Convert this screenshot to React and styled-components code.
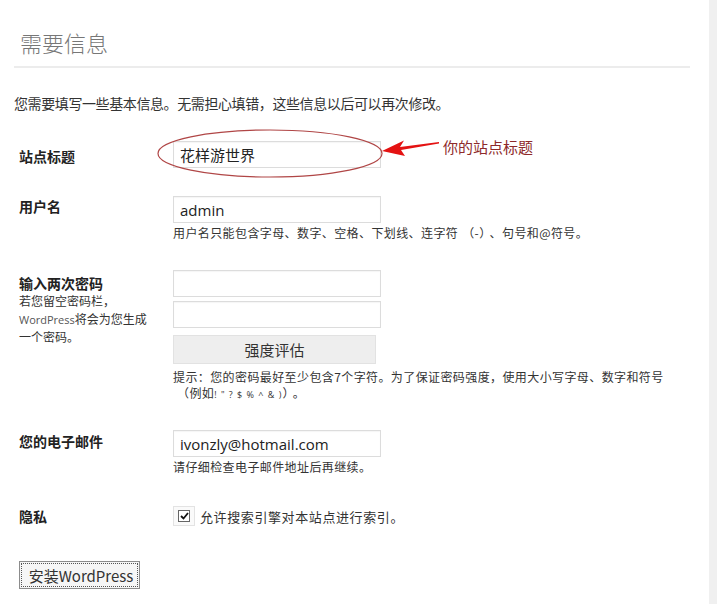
import styled, { createGlobalStyle } from 'styled-components';

const GlobalStyle = createGlobalStyle`
  html, body {
    margin: 0;
    padding: 0;
    background: #fff;
  }
  body {
    font-family: 'Open Sans', 'Noto Sans CJK SC', sans-serif;
    color: #333;
  }
  * { box-sizing: border-box; }
`;

const Page = styled.div`
  position: relative;
  display: flex;
  width: 717px;
  height: 604px;
  overflow: hidden;
`;

const Main = styled.div`
  flex: 1;
  padding: 0 19px 0 14px;
`;

const ScrollStrip = styled.div`
  width: 8px;
  background: #f0f0f0;
`;

const Heading = styled.h1`
  margin: 27px 0 0;
  padding-left: 6px;
  font-size: 22px;
  line-height: 30px;
  font-weight: 300;
  color: #777;
  font-family: 'Noto Sans CJK SC', sans-serif;
`;

const Divider = styled.div`
  margin-top: 9px;
  height: 2px;
  background: #ececec;
`;

const Intro = styled.p`
  margin: 25px 0 0;
  font-size: 14px;
  line-height: 20px;
  letter-spacing: -0.4px;
  font-family: 'Noto Sans CJK SC', sans-serif;
  color: #333;
`;

const Row = styled.div`
  display: flex;
  padding-left: 5px;
  margin-top: ${p => p.$top}px;
`;

const Label = styled.div`
  width: 154px;
  flex-shrink: 0;
  padding-top: ${p => p.$pad || 0}px;
`;

const LabelTitle = styled.div`
  font-size: 14px;
  line-height: 20px;
  font-weight: 700;
  color: #222;
  font-family: 'Noto Sans CJK SC', sans-serif;
`;

const LabelNote = styled.div`
  margin-top: -1px;
  font-size: 12px;
  line-height: 17.5px;
  color: #333;
  font-family: 'Noto Sans CJK SC', sans-serif;
`;

const Small = styled.span`
  font-family: 'Open Sans', sans-serif;
  font-size: 11px;
  color: #555;
`;

const Field = styled.div`
  display: flex;
  flex-direction: column;
  align-items: flex-start;
`;

const Input = styled.input`
  width: 208px;
  height: 27px;
  margin-top: ${p => p.$top || 0}px;
  padding: 0 6px;
  border: 1px solid #dcdcdc;
  box-shadow: inset 0 1px 1px rgba(0, 0, 0, 0.04);
  font-size: 15px;
  font-family: 'Open Sans', 'Noto Sans CJK SC', sans-serif;
  color: #222;
  outline: none;
  background: #fff;
`;

const Hint = styled.div`
  margin-top: ${p => p.$top || 2}px;
  font-size: 12px;
  line-height: 16px;
  letter-spacing: 0.4px;
  color: #333;
  font-family: 'Noto Sans CJK SC', sans-serif;
  white-space: nowrap;
`;

// full-width brackets: keep the empty half of the em box
const Paren = styled.span`
  padding: ${p => (p.$left ? '0 0 0 4px' : '0 4px 0 0')};
`;

const TinyLatin = styled.span`
  font-family: 'Open Sans', sans-serif;
  font-size: 9px;
  letter-spacing: 1px;
`;

const StrengthBox = styled.div`
  margin-top: 7px;
  width: 203px;
  height: 29px;
  display: flex;
  align-items: center;
  justify-content: center;
  background: #eeeeee;
  border: 1px solid #e2e2e2;
  font-size: 15px;
  color: #333;
  font-family: 'Noto Sans CJK SC', sans-serif;
`;

const CheckRow = styled.label`
  display: flex;
  align-items: center;
  gap: 5px;
  font-size: 13px;
  letter-spacing: 0.6px;
  color: #333;
  font-family: 'Noto Sans CJK SC', sans-serif;
`;

const CheckFrame = styled.span`
  width: 22px;
  height: 20px;
  display: flex;
  align-items: center;
  justify-content: center;
  border: 1px solid #e3e3e3;
  background: #fafafa;
`;

const CheckBox = styled.span`
  width: 12px;
  height: 12px;
  display: flex;
  align-items: center;
  justify-content: center;
  border: 1px solid #666;
  background: #fff;
`;

const InstallButton = styled.button`
  margin: 35px 0 0 5px;
  width: 121px;
  height: 28px;
  padding: 0 0 0 3px;
  border: 1px solid #8c8c8c;
  background: #f6f6f6;
  font-size: 15px;
  color: #333;
  font-family: 'Noto Sans CJK SC', sans-serif;
  outline: 1px dotted #555;
  outline-offset: -3px;
`;

const Overlay = styled.svg`
  position: absolute;
  left: 0;
  top: 0;
  pointer-events: none;
`;

const Callout = styled.span`
  position: absolute;
  left: 443px;
  top: 136px;
  font-size: 15px;
  line-height: 22px;
  color: #8e2a2a;
  font-family: 'Noto Sans CJK SC', sans-serif;
`;

export default function App() {
  return (
    <Page>
      <GlobalStyle />
      <Main>
        <Heading>需要信息</Heading>
        <Divider />
        <Intro>您需要填写一些基本信息。无需担心填错，这些信息以后可以再次修改。</Intro>

        <Row $top={28}>
          <Label $pad={5}><LabelTitle>站点标题</LabelTitle></Label>
          <Field>
            <Input defaultValue="花样游世界" />
          </Field>
        </Row>

        <Row $top={28}>
          <Label $pad={0}><LabelTitle>用户名</LabelTitle></Label>
          <Field>
            <Input defaultValue="admin" />
            <Hint>
              用户名只能包含字母、数字、空格、下划线、连字符<Paren $left>（</Paren>-<Paren>）</Paren>、句号和@符号。
            </Hint>
          </Field>
        </Row>

        <Row $top={29}>
          <Label $pad={3}>
            <LabelTitle>输入两次密码</LabelTitle>
            <LabelNote>
              若您留空密码栏，<br />
              <Small>WordPress</Small>将会为您生成<br />
              一个密码。
            </LabelNote>
          </Label>
          <Field>
            <Input type="password" />
            <Input type="password" $top={4} />
            <StrengthBox>强度评估</StrengthBox>
            <Hint $top={5}>
              提示：您的密码最好至少包含7个字符。为了保证密码强度，使用大小写字母、数字和符号<br />
              <Paren $left>（</Paren>例如<TinyLatin>! " ? $ % ^ &amp; )</TinyLatin><Paren>）</Paren>。
            </Hint>
          </Field>
        </Row>

        <Row $top={27}>
          <Label $pad={1}><LabelTitle>您的电子邮件</LabelTitle></Label>
          <Field>
            <Input defaultValue="ivonzly@hotmail.com" />
            <Hint>请仔细检查电子邮件地址后再继续。</Hint>
          </Field>
        </Row>

        <Row $top={31}>
          <Label $pad={0}><LabelTitle>隐私</LabelTitle></Label>
          <Field>
            <CheckRow>
              <CheckFrame>
                <CheckBox>
                  <svg width="9" height="8" viewBox="0 0 9 8">
                    <path d="M1 4 L3.5 6.5 L8 1" fill="none" stroke="#111" strokeWidth="1.8" />
                  </svg>
                </CheckBox>
              </CheckFrame>
              允许搜索引擎对本站点进行索引。
            </CheckRow>
          </Field>
        </Row>

        <InstallButton>安装WordPress</InstallButton>
      </Main>
      <ScrollStrip />

      <Overlay width="717" height="604" viewBox="0 0 717 604">
        <ellipse cx="270" cy="153.5" rx="112" ry="23.5" fill="none" stroke="#b04646" strokeWidth="1.2" />
        <polygon
          points="382,151 404,140.5 400,147 439,142 439,143.5 401,150 405,156"
          fill="#e41212"
        />
      </Overlay>
      <Callout>你的站点标题</Callout>
    </Page>
  );
}
